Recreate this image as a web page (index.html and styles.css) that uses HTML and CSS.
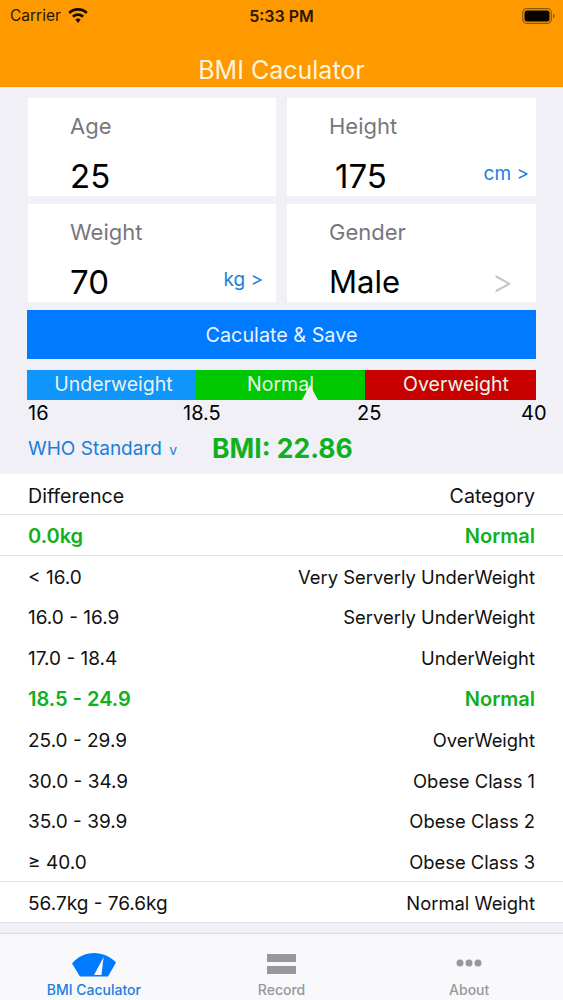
FILE: index.html
```html
<!DOCTYPE html>
<html lang="en">
<head>
    <meta charset="UTF-8">
    <title>BMI Caculator</title>
    <link rel="stylesheet" href="styles.css">
</head>
<body>
    <div class="phone">
        <header class="topbar">
            <div class="status">
                <div class="status-left">
                    <span>Carrier</span>
                    <svg class="wifi" viewBox="0 0 20 15" width="20" height="15">
                        <path d="M10 0C6.2 0 2.8 1.5.3 3.9l1.9 2C4.2 4 7 2.8 10 2.8S15.800 4 17.800 5.900l1.900-2C17.200 1.500 13.800 0 10 0z" />
                        <path d="M10 5.300c-2.300 0-4.400.9-6 2.400l2 2c1-1 2.400-1.600 4-1.600s3 .6 4 1.600l2-2c-1.600-1.500-3.700-2.400-6-2.400z" />
                        <path d="M10 10.400c-1 0-1.900.4-2.600 1L10 15l2.600-3.600c-.7-.6-1.600-1-2.600-1z" />
                    </svg>
                </div>
                <div class="clock">5:33 PM</div>
                <svg class="battery" viewBox="0 0 34 16" width="34" height="16">
                    <rect x="0.700" y="0.700" width="28.600" height="14.600" rx="4" fill="none" stroke="#8a5a10" stroke-width="1.200" />
                    <rect x="2.500" y="2.500" width="25" height="11" rx="2.500" fill="#0a0500" />
                    <rect x="31" y="6" width="1.500" height="4" rx="0.700" fill="#8a5a10" />
                </svg>
            </div>
            <h1 class="title">BMI Caculator</h1>
        </header>

        <section class="form">
            <div class="card">
                <div class="card-label">Age</div>
                <div class="card-value">25</div>
            </div>
            <div class="card">
                <div class="card-label">Height</div>
                <div class="card-value card-value-shift">175</div>
                <div class="unit unit-cm">cm &gt;</div>
            </div>
            <div class="card">
                <div class="card-label">Weight</div>
                <div class="card-value">70</div>
                <div class="unit unit-kg">kg &gt;</div>
            </div>
            <div class="card">
                <div class="card-label">Gender</div>
                <div class="card-value card-value-text">Male</div>
                <div class="unit unit-gender">&gt;</div>
            </div>
        </section>

        <button class="save-btn">Caculate &amp; Save</button>

        <div class="scale-bar">
            <div class="seg seg-under">Underweight</div>
            <div class="seg seg-normal">Normal</div>
            <div class="seg seg-over">Overweight</div>
            <div class="marker"></div>
        </div>
        <div class="scale-nums">
            <span class="num-16">16</span>
            <span class="num-185">18.5</span>
            <span class="num-25">25</span>
            <span>40</span>
        </div>

        <div class="result">
            <div class="standard">WHO Standard <span class="caret">v</span></div>
            <div class="bmi">BMI: 22.86</div>
        </div>

        <section class="table">
            <div class="row row-line row-head"><span>Difference</span><span>Category</span></div>
            <div class="row row-line row-green"><span>0.0kg</span><span>Normal</span></div>
            <div class="row"><span>&lt; 16.0</span><span>Very Serverly UnderWeight</span></div>
            <div class="row"><span>16.0 - 16.9</span><span>Serverly UnderWeight</span></div>
            <div class="row"><span>17.0 - 18.4</span><span>UnderWeight</span></div>
            <div class="row row-green"><span>18.5 - 24.9</span><span>Normal</span></div>
            <div class="row"><span>25.0 - 29.9</span><span>OverWeight</span></div>
            <div class="row"><span>30.0 - 34.9</span><span>Obese Class 1</span></div>
            <div class="row"><span>35.0 - 39.9</span><span>Obese Class 2</span></div>
            <div class="row row-line"><span>≥ 40.0</span><span>Obese Class 3</span></div>
            <div class="row row-line"><span>56.7kg - 76.6kg</span><span>Normal Weight</span></div>
        </section>

        <nav class="tabbar">
            <div class="tab tab-active">
                <svg viewBox="0 0 44 24" width="44" height="24">
                    <path d="M0 10.500C6 3.500 13.500 0 22 0s16 3.500 22 9.500L36 23.500H8z" fill="#007aff" />
                    <path d="M31.600 4L22 22h7.500z" fill="#f9f9fb" />
                </svg>
                <span>BMI Caculator</span>
            </div>
            <div class="tab">
                <svg viewBox="0 0 30 24" width="30" height="24">
                    <rect x="0" y="1" width="29" height="8" fill="#98979d" />
                    <rect x="0" y="13" width="29" height="8" fill="#98979d" />
                </svg>
                <span>Record</span>
            </div>
            <div class="tab">
                <svg viewBox="0 0 30 24" width="30" height="24">
                    <circle cx="6" cy="10" r="3.500" fill="#98979d" />
                    <circle cx="15" cy="10" r="3.500" fill="#98979d" />
                    <circle cx="24" cy="10" r="3.500" fill="#98979d" />
                </svg>
                <span>About</span>
            </div>
        </nav>
    </div>
</body>
</html>
```

FILE: styles.css
```css
body {
    margin: 0;
    background: #f0f0f6;
    font-family: 'Inter', 'Roboto', sans-serif;
    color: #000;
}

.phone {
    width: 563px;
    height: 1000px;
    overflow: hidden;
    display: flex;
    flex-direction: column;
}

/* orange header */
.topbar {
    height: 87px;
    background: #ff9900;
    flex-shrink: 0;
}

.status {
    height: 31px;
    display: grid;
    grid-template-columns: 1fr auto 1fr;
    align-items: center;
    padding: 0 7px 2px;
    font-size: 15.500px;
    color: #2a1500;
}

.status-left {
    display: flex;
    align-items: center;
    gap: 7px;
    margin-left: 3px;
}

.wifi {
    fill: #140a00;
}

.clock {
    font-weight: 600;
    font-size: 16px;
}

.battery {
    justify-self: end;
}

.title {
    margin: 22px 0 0;
    text-align: center;
    font-size: 25px;
    line-height: 30px;
    font-weight: 400;
    color: #fff4dc;
}

/* input cards */
.form {
    display: grid;
    grid-template-columns: 248px 249px;
    grid-auto-rows: 98px;
    column-gap: 11px;
    row-gap: 8px;
    padding: 11px 0 0 28px;
}

.card {
    background: #fff;
    position: relative;
    padding-left: 42px;
}

.card-label {
    font-size: 22px;
    line-height: 28px;
    margin-top: 14px;
    color: #77777b;
}

.card-value {
    font-size: 33px;
    line-height: 40px;
    margin-top: 16px;
}

.card-value-shift {
    margin-left: 6px;
}

.card-value-text {
    font-size: 31px;
}

.unit {
    position: absolute;
    right: 7px;
    bottom: 11px;
    font-size: 19px;
    color: #1a7fdc;
}

.unit-kg {
    right: 13px;
    bottom: 11px;
}

.unit-gender {
    right: 23px;
    bottom: 1px;
    font-size: 33px;
    font-weight: 300;
    color: #c8c8c8;
}

.save-btn {
    display: block;
    width: 509px;
    height: 49px;
    margin: 8px 0 0 27px;
    border: none;
    background: #007aff;
    color: #ecf4ff;
    font-family: inherit;
    font-size: 19.800px;
}

/* bmi scale */
.scale-bar {
    display: flex;
    position: relative;
    width: 509px;
    height: 30px;
    margin: 11px 0 0 27px;
    color: #eaf3ea;
    font-size: 19.500px;
}

.seg {
    display: flex;
    align-items: center;
    justify-content: center;
    width: 169px;
    box-sizing: border-box;
    padding-bottom: 2px;
}

.seg-under {
    background: #0f95fb;
    padding-left: 4px;
}

.seg-normal {
    background: #00c800;
}

.seg-over {
    width: 171px;
    background: #c80000;
    padding-left: 11px;
}

.marker {
    position: absolute;
    left: 275px;
    bottom: 0;
    width: 16px;
    height: 15px;
    background: #f0f0f6;
    clip-path: polygon(50% 0, 100% 100%, 0 100%);
}

.scale-nums {
    display: flex;
    padding-left: 28px;
    font-size: 20px;
    line-height: 26px;
}

.num-16 {
    width: 155px;
}

.num-185 {
    width: 174px;
}

.num-25 {
    width: 164px;
}

.result {
    display: flex;
    align-items: center;
    height: 44px;
    padding: 0 0 4px 28px;
}

.standard {
    width: 184px;
    font-size: 19px;
    color: #1a7fdc;
}

.caret {
    font-size: 14px;
    margin-left: 2px;
}

.bmi {
    font-size: 26.500px;
    font-weight: 700;
    color: #10b020;
}

/* table */
.table {
    background: #fff;
    height: 448px;
    flex-shrink: 0;
    border-bottom: 1px solid #e0e0e4;
}

.row {
    display: flex;
    justify-content: space-between;
    align-items: baseline;
    height: 40.800px;
    box-sizing: border-box;
    padding: 10px 28px 0;
    font-size: 19px;
    color: #111;
}

.row span:last-child {
    font-size: 18.400px;
}

.row-line {
    border-bottom: 1px solid #e4e4e8;
}

.row-head {
    font-size: 19.600px;
}

.row-head span:last-child {
    font-size: 19.600px;
}

.row-green {
    padding-top: 9px;
    color: #10b020;
    font-size: 20px;
    font-weight: 600;
}

.row-green span:last-child {
    font-size: 20px;
}

/* tabs */
.tabbar {
    display: flex;
    flex: 1;
    margin-top: 10px;
    background: #f9f9fb;
    border-top: 1px solid #dcdce0;
}

.tab {
    flex: 1;
    display: flex;
    flex-direction: column;
    align-items: center;
    padding-top: 19px;
    color: #98979d;
    font-size: 14px;
    font-weight: 500;
}

.tab svg {
    margin-bottom: 4px;
}

.tab-active {
    color: #1a7fdc;
}
```
